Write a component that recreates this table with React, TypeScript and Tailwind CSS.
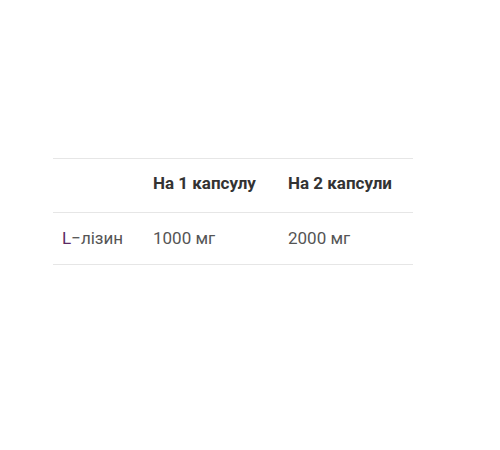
import React from 'react';

const rows = [{ name: 'лізин', prefix: 'L', one: '1000 мг', two: '2000 мг' }];

const App: React.FC = () => {
  return (
    <div className="min-h-[450px] bg-white pt-[158px] pl-[53px]" style={{ fontFamily: 'Roboto, "Noto Sans", sans-serif' }}>
      <table className="w-[360px] border-collapse table-fixed text-[17px]">
        <colgroup>
          <col className="w-[88px]" />
          <col className="w-[135px]" />
          <col className="w-[137px]" />
        </colgroup>
        <thead>
          <tr className="border-t border-b border-[#e6e6e6] h-[54px]">
            <th></th>
            <th className="text-left font-bold text-[#333333] pl-[12px] pb-[3px]">На 1 капсулу</th>
            <th className="text-left font-bold text-[#333333] pl-[12px] pb-[3px]">На 2 капсули</th>
          </tr>
        </thead>
        <tbody>
          {rows.map((row, i) => (
            <tr key={i} className="border-b border-[#e6e6e6] h-[52px]">
              <td className="pl-[9px] text-[#555555]">
                <span className="text-[#5b2a63]">{row.prefix}</span>−{row.name}
              </td>
              <td className="pl-[12px] text-[#555555]">{row.one}</td>
              <td className="pl-[12px] text-[#555555]">{row.two}</td>
            </tr>
          ))}
        </tbody>
      </table>
    </div>
  );
};

export default App;
